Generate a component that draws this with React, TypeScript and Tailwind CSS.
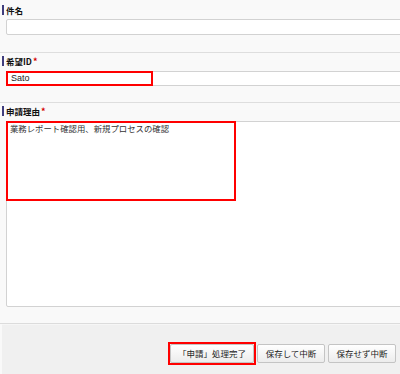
import React from 'react';

const Label: React.FC<{ text: string; req?: boolean }> = ({ text, req }) => (
  <div className="flex items-center h-[12px] gap-[2px]">
    <span className="w-[2px] h-[10px] bg-[#3f3d7d]" />
    <span className="text-[8.5px] font-bold text-[#111] leading-none">{text}</span>
    {req && <span className="text-[9px] font-bold text-[#d40000] leading-none -ml-[1px]">*</span>}
  </div>
);

const Button: React.FC<{ label: string; w: string }> = ({ label, w }) => (
  <button
    type="button"
    className={`${w} h-[19px] rounded-[2px] border border-[#c4c4c4] bg-gradient-to-b from-white to-[#ececec] text-[8.5px] text-[#222] leading-none flex items-center justify-center`}
  >
    {label}
  </button>
);

export default function App() {
  return (
    <div className="w-[400px] h-[374px] overflow-hidden bg-[#f9f9f9] flex flex-col font-['Noto_Sans_CJK_JP',sans-serif]">
      {/* 件名 */}
      <div className="pl-[2px] pt-[4px] pb-[17px] border-b border-[#dedede]">
        <Label text="件名" />
        <div className="ml-[4px] mt-[3px] w-[410px] h-[16px] bg-white border border-[#d2d2d2] rounded-[2px]" />
      </div>

      {/* 希望ID */}
      <div className="pl-[2px] pt-[2px] pb-[16px] border-b border-[#dedede]">
        <Label text="希望ID" req />
        <div className="relative ml-[4px] mt-[4px] w-[410px] h-[15px] bg-white border border-[#d2d2d2] rounded-[2px] flex items-center pl-[4px]">
          <span className="text-[9px] text-[#222] font-['Liberation_Sans',sans-serif] leading-none">Sato</span>
          <div className="absolute -left-[1px] -top-[1px] w-[147px] h-[15px] border-2 border-[#ff0000]" />
        </div>
      </div>

      {/* 申請理由 */}
      <div className="pl-[2px] pt-[2px] pb-[16px] border-b border-[#dcdcdc]">
        <Label text="申請理由" req />
        <div className="relative ml-[4px] mt-[4px] w-[410px] h-[186px] bg-white border border-[#d2d2d2] rounded-[2px] pl-[3px] pt-[1px] text-[8.4px] leading-[10px] text-[#333]">
          業務レポート確認用、新規プロセスの確認
          <div className="absolute -left-[1px] -top-[1px] w-[230px] h-[80px] border-2 border-[#ff0000]" />
        </div>
      </div>

      {/* footer */}
      <div className="flex-1 ml-[2px] bg-[#f0f0f0] border-t border-[#f6f6f6] pt-[19px] pr-[4px] flex justify-end items-start gap-[3px]">
        <div className="relative">
          <Button label="「申請」処理完了" w="w-[84px]" />
          <div className="absolute -left-[2px] -top-[2px] -right-[2px] -bottom-[2px] border-2 border-[#ff0000]" />
        </div>
        <Button label="保存して中断" w="w-[68px]" />
        <Button label="保存せず中断" w="w-[68px]" />
      </div>
    </div>
  );
}
